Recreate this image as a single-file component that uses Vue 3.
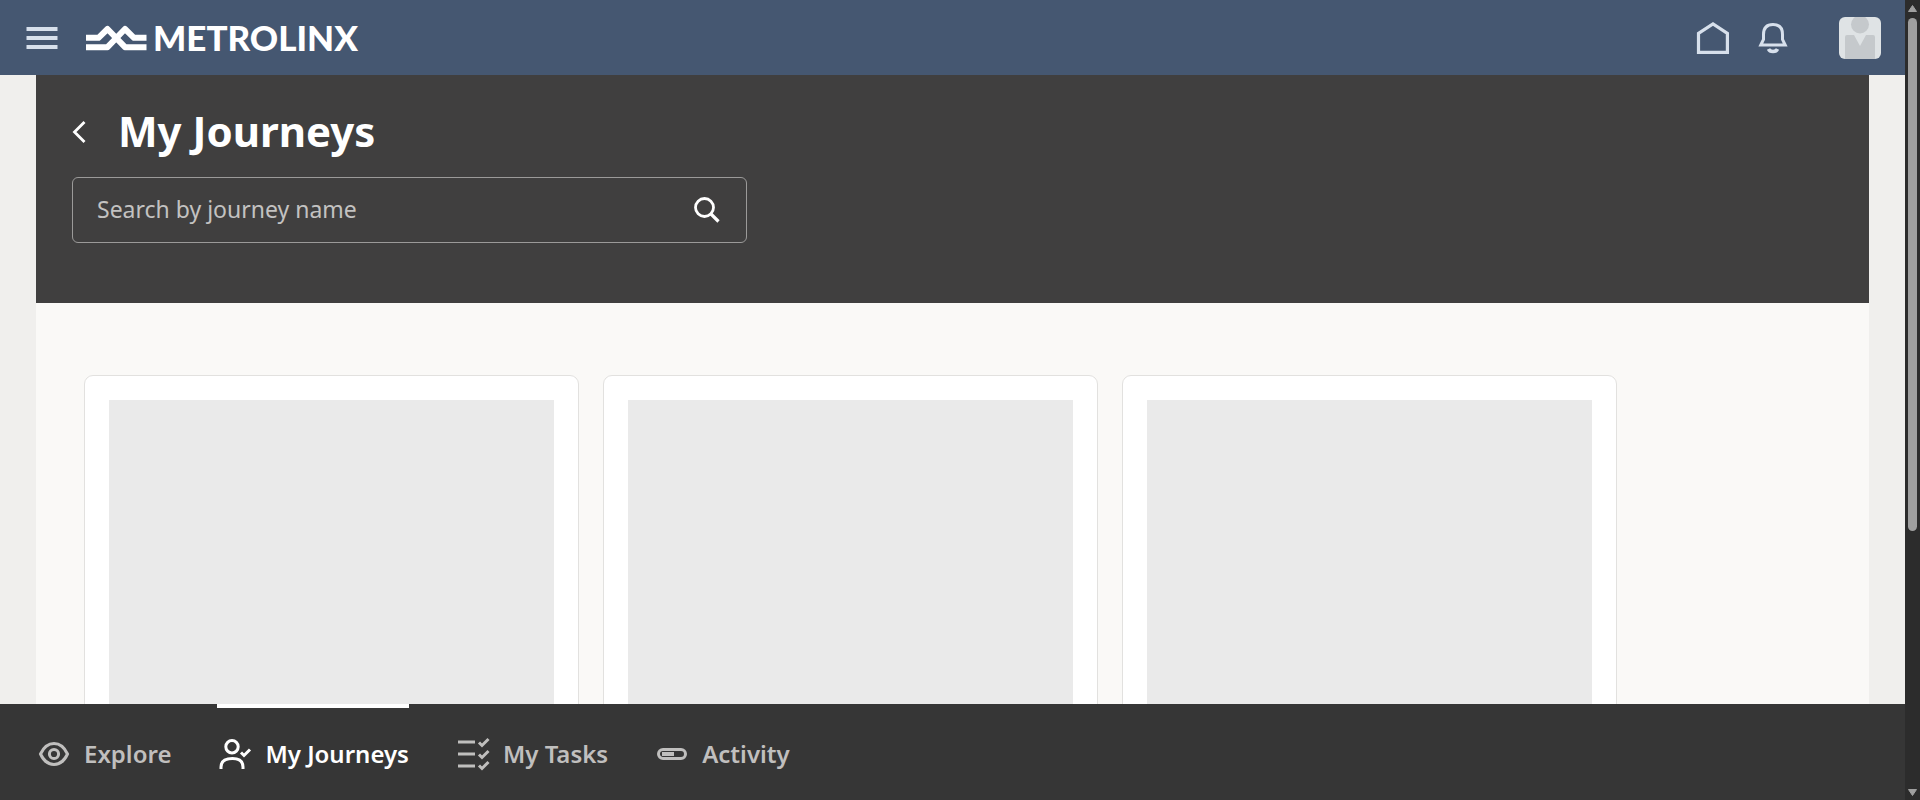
<script setup>
import { ref } from 'vue'

const query = ref('')
const active = ref('My Journeys')
const cards = [1, 2, 3]
const tabs = [
  { name: 'Explore', icon: 'eye' },
  { name: 'My Journeys', icon: 'person' },
  { name: 'My Tasks', icon: 'tasks' },
  { name: 'Activity', icon: 'activity' }
]
</script>

<template>
  <div class="shell">
    <div class="app">
      <header class="topbar">
        <button class="icon-btn menu" aria-label="Menu">
          <svg width="32" height="24" viewBox="0 0 32 24" fill="none" stroke="currentColor" stroke-width="4">
            <path d="M0.500 3H31.500M0.500 12H31.500M0.500 21H31.500" />
          </svg>
        </button>
        <a class="brand" href="#">
          <svg width="61" height="26" viewBox="0 0 61 26" fill="none" stroke="currentColor" stroke-width="6" stroke-linejoin="round">
            <path d="M0 12.800H12.500L21.500 4L39 22.200H60.500" />
            <path d="M0 22.200H21.500L39 4L48 12.800H60.500" />
          </svg>
          <span>METROLINX</span>
        </a>
        <div class="actions">
          <button class="icon-btn" aria-label="Home">
            <svg width="36" height="36" viewBox="0 0 36 36" fill="none" stroke="currentColor" stroke-width="3.200">
              <path d="M3.500 13.300L18 4L32.400 13.300V32.400H3.500Z" />
            </svg>
          </button>
          <button class="icon-btn" aria-label="Notifications">
            <svg width="36" height="36" viewBox="0 0 36 36" fill="none" stroke="currentColor" stroke-width="3">
              <path d="M5.800 25L8.500 19.500V14.500C8.500 8 12 4.500 18 4.500S27.500 8 27.500 14.500V19.500L30.200 25Z" />
              <path d="M13.500 29C14.800 32.300 21.200 32.300 22.500 29" stroke-width="3.500" />
            </svg>
          </button>
          <button class="icon-btn avatar" aria-label="Profile">
            <svg width="42" height="42" viewBox="0 0 42 42">
              <rect width="42" height="42" fill="#dfe3e5" />
              <circle cx="21" cy="7.500" r="9" fill="#c5c9cc" />
              <path d="M6 42V20Q6 18 8 18H15L21 29L27 18H34Q36 18 36 20V42Z" fill="#c5c9cc" />
            </svg>
          </button>
        </div>
      </header>

      <main class="content">
        <section class="hero">
          <div class="title-row">
            <button class="icon-btn back" aria-label="Back">
              <svg width="16" height="24" viewBox="0 0 16 24" fill="none" stroke="currentColor" stroke-width="2.800">
                <path d="M12.500 2L2.500 12L12.500 22" />
              </svg>
            </button>
            <h1>My Journeys</h1>
          </div>
          <form class="search" @submit.prevent>
            <input v-model="query" type="text" placeholder="Search by journey name" aria-label="Search by journey name" />
            <button class="icon-btn" aria-label="Search">
              <svg width="28" height="28" viewBox="0 0 28 28" fill="none" stroke="currentColor" stroke-width="2.800">
                <circle cx="10.500" cy="11.500" r="9" />
                <path d="M17 18L24.500 25.500" stroke-width="3.200" />
              </svg>
            </button>
          </form>
        </section>
        <section class="cards" aria-label="Journeys">
          <article v-for="card in cards" :key="card" class="card">
            <div class="placeholder"></div>
          </article>
        </section>
      </main>

      <nav class="tabs">
        <a
          v-for="tab in tabs"
          :key="tab.name"
          href="#"
          class="tab"
          :class="{ active: active === tab.name }"
          @click.prevent="active = tab.name"
        >
          <svg width="36" height="36" viewBox="0 0 36 36" fill="none" stroke="currentColor" stroke-width="3">
            <template v-if="tab.icon === 'eye'">
              <path d="M4.500 18C7.500 11.500 12.500 7.500 18 7.500S28.500 11.500 31.500 18C28.500 24.500 23.500 28.500 18 28.500S7.500 24.500 4.500 18Z" />
              <circle cx="18" cy="18" r="4.600" />
            </template>
            <template v-else-if="tab.icon === 'person'">
              <circle cx="15" cy="10.700" r="6.200" />
              <path d="M4 33V31C4 25 8.500 22.500 15.500 22.500S26 25 26 31V33" />
              <path d="M24 16.500L27 19.500L33 13.500" />
            </template>
            <template v-else-if="tab.icon === 'tasks'">
              <path d="M3 6H20M3 18H20M3 30H20" />
              <path d="M24 6.500L27 9.500L33.500 3M24 18.500L27 21.500L33.500 15M24 29.500L27 32.500L33.500 26" />
            </template>
            <template v-else>
              <rect x="4.500" y="13.500" width="27" height="9" rx="4.500" />
              <path d="M8 18H20" stroke-width="4" />
            </template>
          </svg>
          <span>{{ tab.name }}</span>
        </a>
      </nav>
    </div>

    <div class="scrollbar" aria-hidden="true">
      <svg width="9" height="7" viewBox="0 0 9 7"><path d="M4.500 0.500L8.500 6.500H0.500Z" fill="#9f9f9f" stroke="#9f9f9f" stroke-linejoin="round" /></svg>
      <div class="track"><div class="thumb"></div></div>
      <svg width="9" height="7" viewBox="0 0 9 7"><path d="M4.500 6.500L8.500 0.500H0.500Z" fill="#9f9f9f" stroke="#9f9f9f" stroke-linejoin="round" /></svg>
    </div>
  </div>
</template>

<style>
body {
  margin: 0;
  overflow: hidden;
}
</style>

<style scoped>
.shell {
  display: flex;
  height: 100vh;
  font-family: "Noto Sans", "Open Sans", sans-serif;
}
.shell * {
  box-sizing: border-box;
}
.app {
  flex: 1;
  min-width: 0;
  display: flex;
  flex-direction: column;
  background: #f0efed;
}
svg {
  display: block;
  flex: none;
}
.icon-btn {
  padding: 0;
  border: 0;
  background: none;
  color: inherit;
  cursor: pointer;
}
.topbar {
  flex: none;
  display: flex;
  align-items: center;
  height: 75px;
  padding: 0 24px 0 26px;
  background: #455771;
  color: #d7e0ec;
}
.brand {
  display: flex;
  align-items: center;
  gap: 6px;
  margin-left: 28px;
  color: #fff;
  font-family: Lato, sans-serif;
  font-size: 35px;
  line-height: 40px;
  font-weight: 900;
  text-decoration: none;
}
.brand span {
  padding-bottom: 2px;
}
.actions {
  display: flex;
  align-items: center;
  gap: 24px;
  margin-left: auto;
}
.avatar {
  margin-left: 24px;
  border-radius: 6px;
  overflow: hidden;
}
.content {
  flex: 1;
  min-height: 0;
  margin: 0 36px;
  overflow: hidden;
  background: #faf9f7;
}
.hero {
  padding: 30px 36px 60px;
  background: #403f3f;
  color: #fff;
}
.title-row {
  display: flex;
  align-items: center;
  gap: 30px;
  height: 54px;
  margin-bottom: 18px;
}
h1 {
  margin: 0;
  padding-bottom: 2px;
  font-size: 42px;
  line-height: 52px;
  font-weight: 700;
}
.search {
  display: flex;
  align-items: center;
  max-width: 675px;
  height: 66px;
  padding: 0 24px;
  border: 1px solid #9b9a99;
  border-radius: 6px;
}
.search input {
  flex: 1;
  min-width: 0;
  padding: 0 0 2px;
  border: 0;
  outline: 0;
  background: none;
  color: #fff;
  font: inherit;
  font-size: 23px;
}
.search input::placeholder {
  color: #c3c2c1;
  opacity: 1;
}
.cards {
  display: flex;
  flex-wrap: wrap;
  gap: 24px;
  padding: 72px 48px;
}
.card {
  width: 495px;
  padding: 24px;
  border: 1px solid #e2e1df;
  border-radius: 9px;
  background: #fff;
}
.placeholder {
  height: 480px;
  background: #eaeaea;
}
.tabs {
  flex: none;
  display: flex;
  gap: 46px;
  height: 96px;
  padding: 0 36px;
  background: #363636;
}
.tab {
  display: flex;
  align-items: center;
  gap: 12px;
  border-top: 4px solid transparent;
  color: #c0bfbe;
  font-size: 24px;
  font-weight: 600;
  text-decoration: none;
  white-space: nowrap;
}
.tab span {
  padding-bottom: 2px;
}
.tab.active {
  border-color: #fff;
  color: #fff;
}
.scrollbar {
  flex: none;
  display: flex;
  flex-direction: column;
  align-items: center;
  gap: 6px;
  width: 15px;
  padding: 5px 0 4px;
  background: #2c2c2c;
}
.track {
  flex: 1;
}
.thumb {
  width: 9px;
  height: 67%;
  border-radius: 5px;
  background: #9f9f9f;
}
</style>
